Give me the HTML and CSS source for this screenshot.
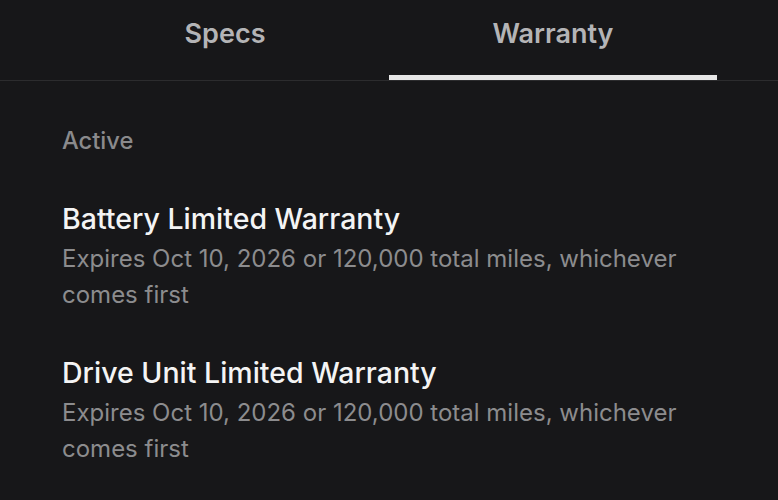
FILE: index.html
```html
<!DOCTYPE html>
<html>
<head>
<meta charset="utf-8">
<link rel="stylesheet" href="styles.css">
</head>
<body>
<div class="tabs">
  <div class="tab">Specs</div>
  <div class="tab active">Warranty</div>
</div>
<div class="content">
  <div class="section-label">Active</div>
  <div class="item">
    <div class="item-title">Battery Limited Warranty</div>
    <div class="item-desc">Expires Oct 10, 2026 or 120,000 total miles, whichever comes first</div>
  </div>
  <div class="item">
    <div class="item-title">Drive Unit Limited Warranty</div>
    <div class="item-desc">Expires Oct 10, 2026 or 120,000 total miles, whichever comes first</div>
  </div>
</div>
</body>
</html>
```

FILE: styles.css
```css
html, body {
  margin: 0;
  padding: 0;
  background: #171719;
  font-family: Inter, "Noto Sans", sans-serif;
  -webkit-font-smoothing: antialiased;
}
.tabs {
  display: grid;
  grid-template-columns: 1fr 1fr;
  padding: 0 61px;
  border-bottom: 1px solid #2c2c2e;
}
.tab {
  height: 80px;
  display: flex;
  align-items: flex-start;
  justify-content: center;
  padding-top: 17px;
  box-sizing: border-box;
  font-size: 27px;
  line-height: 34px;
  font-weight: 600;
  color: #b4b4b6;
  border-bottom: 5px solid transparent;
}
.tab.active {
  border-bottom-color: #e6e6e6;
}
.content {
  padding: 0 62px;
}
.section-label {
  margin-top: 45px;
  font-size: 23.7px;
  font-weight: 500;
  color: #8a8a8c;
  line-height: 30px;
}
.item {
  margin-top: 45px;
}
.item + .item {
  margin-top: 42px;
}
.item-title {
  font-size: 28.5px;
  font-weight: 500;
  color: #f4f4f4;
  line-height: 36px;
}
.item-desc {
  font-size: 24px;
  font-weight: 400;
  color: #8c8c8e;
  line-height: 36px;
  margin-top: 4px;
}
```
